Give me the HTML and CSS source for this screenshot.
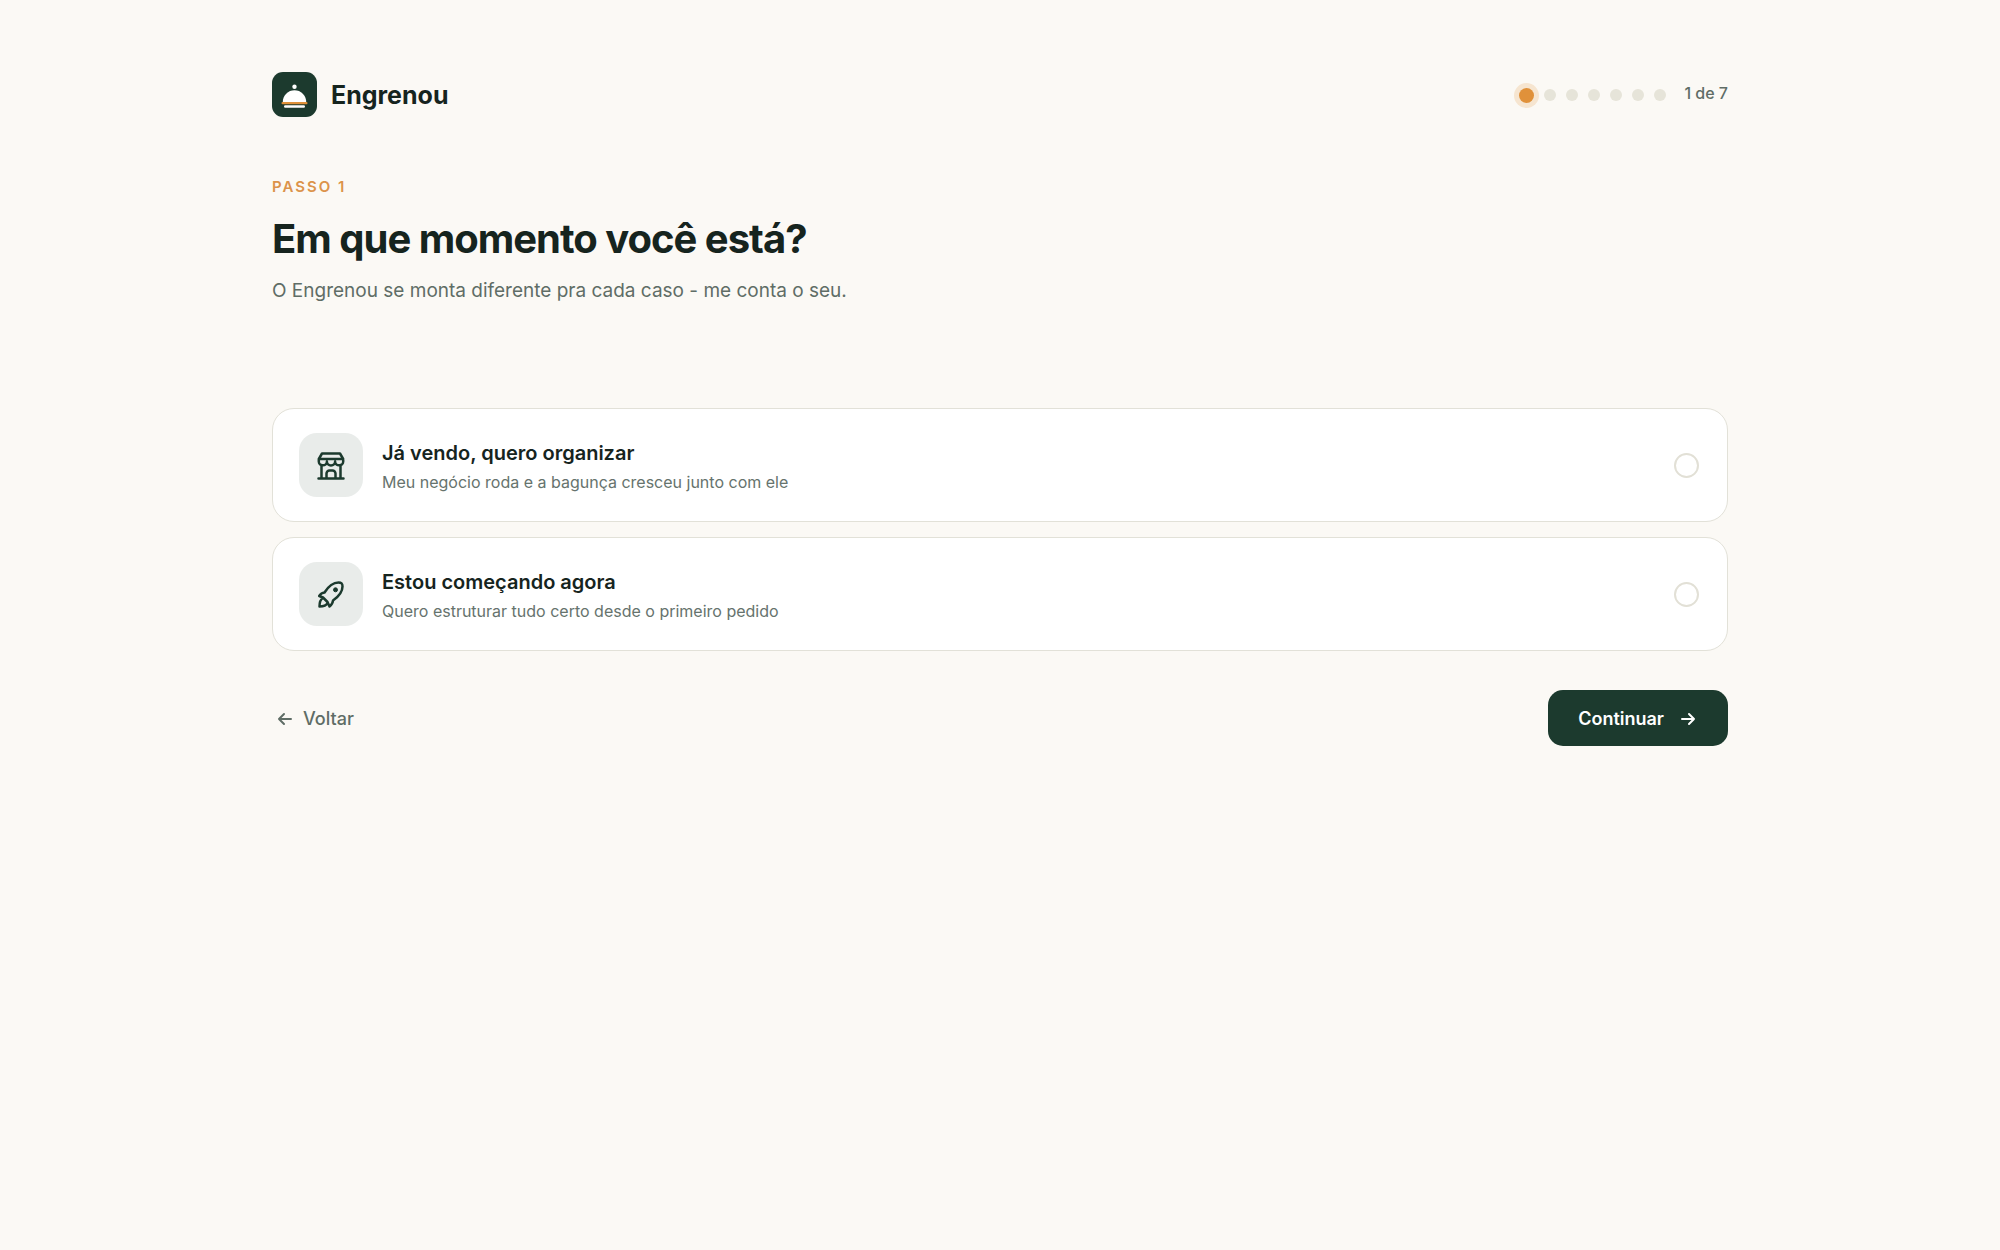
FILE: index.html
```html
<!DOCTYPE html>
<html lang="pt-BR">
<head>
<meta charset="utf-8">
<meta name="viewport" content="width=device-width, initial-scale=1">
<title>Engrenou</title>
<link rel="stylesheet" href="styles.css">
</head>
<body>
<div class="page">
  <header class="topbar">
    <div class="brand">
      <svg class="brand-mark" viewBox="0 0 45 45" aria-hidden="true">
        <rect width="45" height="45" rx="11" fill="#1c3a2e"/>
        <circle cx="22.5" cy="14.8" r="2.2" fill="#fff"/>
        <path d="M10.8 30a11.7 11.7 0 0 1 23.4 0z" fill="#fff"/>
        <rect x="9.5" y="30" width="26" height="2.2" rx="1" fill="#e0913a"/>
        <rect x="12" y="33.2" width="21" height="2.6" rx="1.2" fill="#fff"/>
      </svg>
      <span class="brand-name">Engrenou</span>
    </div>
    <div class="progress">
      <div class="dots" aria-hidden="true">
        <span class="dot dot-current"></span>
        <span class="dot"></span>
        <span class="dot"></span>
        <span class="dot"></span>
        <span class="dot"></span>
        <span class="dot"></span>
        <span class="dot"></span>
      </div>
      <span class="progress-text">1 de 7</span>
    </div>
  </header>

  <main>
    <p class="eyebrow">PASSO 1</p>
    <h1 class="title">Em que momento você está?</h1>
    <p class="subtitle">O Engrenou se monta diferente pra cada caso - me conta o seu.</p>

    <form class="form">
      <div class="options">
        <label class="option">
          <span class="option-icon">
            <svg viewBox="0 0 32 32" aria-hidden="true">
              <path d="M7 4.500h18l3.200 5.500H3.800z M3.800 10v2.500a4 3.800 0 0 0 8.100 0 4 3.800 0 0 0 8.200 0 4 3.800 0 0 0 8.100 0V10 M6.500 16v13.500 M25.500 16v13.500 M3.500 29.500h25 M11.500 29.500V24.500a3 3 0 0 1 3-3h3a3 3 0 0 1 3 3v5"/>
            </svg>
          </span>
          <span class="option-text">
            <span class="option-title">Já vendo, quero organizar</span>
            <span class="option-desc">Meu negócio roda e a bagunça cresceu junto com ele</span>
          </span>
          <input class="option-radio" type="radio" name="momento" value="vendo">
        </label>
        <label class="option">
          <span class="option-icon">
            <svg viewBox="0 0 32 32" aria-hidden="true">
              <path d="M9.500 14.500C13 9 17.500 4.500 23.500 4.500c3.200 0 4 .8 4 4 0 5.500-4.500 10.500-9.500 14-.2 2.500-1.500 4.500-3.500 6l-2-4.500-4.500-4.500-3.800-1.500c1.200-2 3-3.300 5.300-3.500z M8 20c-2.800 1.500-3.500 4.500-3.500 8.500 4 0 6.800-.8 8-3.500"/>
              <circle class="solid" cx="20.500" cy="11.800" r="2"/>
            </svg>
          </span>
          <span class="option-text">
            <span class="option-title">Estou começando agora</span>
            <span class="option-desc">Quero estruturar tudo certo desde o primeiro pedido</span>
          </span>
          <input class="option-radio" type="radio" name="momento" value="comecando">
        </label>
      </div>

      <div class="actions">
        <button class="button button-back" type="button">
          <svg viewBox="0 0 16 16" aria-hidden="true"><path d="M14 8H2 M7 3L2 8l5 5"/></svg>
          Voltar
        </button>
        <button class="button button-next" type="submit">
          Continuar
          <svg viewBox="0 0 16 16" aria-hidden="true"><path d="M2 8h12 M9 3l5 5-5 5"/></svg>
        </button>
      </div>
    </form>
  </main>
</div>
</body>
</html>
```
FILE: styles.css
```css
* { box-sizing: border-box; }

body {
  margin: 0;
  background: #fbf9f5;
  color: #16241e;
  font-family: Inter, "Liberation Sans", sans-serif;
}

.page {
  max-width: 1504px;
  margin: 0 auto;
  padding: 72px 24px;
}

.topbar,
.brand,
.progress,
.dots,
.option,
.actions,
.button {
  display: flex;
  align-items: center;
}

.topbar { justify-content: space-between; }

.brand { gap: 14px; }

.brand-mark {
  display: block;
  width: 45px;
  height: 45px;
}

.brand-name {
  font-size: 25px;
  font-weight: 700;
  line-height: 32px;
}

.progress { gap: 18px; }

.dots { gap: 10px; padding-top: 1px; }

.dot {
  width: 12px;
  height: 12px;
  border-radius: 50%;
  background: #e6e4d9;
}

.dot-current {
  width: 15px;
  height: 15px;
  background: #e0913a;
  box-shadow: 0 0 0 5px #f6e5d0;
}

.progress-text {
  padding-bottom: 3px;
  color: #5f6d66;
  font-size: 16px;
  font-weight: 500;
  line-height: 24px;
}

.eyebrow {
  margin: 58px 0 0;
  color: #dc934a;
  font-size: 15px;
  font-weight: 600;
  line-height: 24px;
  letter-spacing: 2px;
}

.title {
  margin: 16px 0 0;
  font-size: 40px;
  font-weight: 700;
  line-height: 48px;
  letter-spacing: -1px;
}

.subtitle {
  margin: 12px 0 0;
  color: #5f6d66;
  font-size: 19px;
  line-height: 32px;
}

.form { margin-top: 101px; }

.options {
  display: grid;
  gap: 15px;
}

.option {
  gap: 19px;
  padding: 24px 28px 24px 26px;
  border: 1px solid #e2e1d8;
  border-radius: 22px;
  background: #fff;
  cursor: pointer;
}

.option-icon {
  display: grid;
  place-items: center;
  width: 64px;
  height: 64px;
  border-radius: 18px;
  background: #e9ecea;
}

.option-icon svg {
  width: 32px;
  height: 32px;
}

svg path {
  fill: none;
  stroke: #1c3a2e;
  stroke-width: 2.5;
  stroke-linecap: round;
  stroke-linejoin: round;
}

.brand-mark path {
  fill: #fff;
  stroke: none;
}

.solid {
  fill: #1c3a2e;
  stroke: #1c3a2e;
}

.option-text {
  display: grid;
  flex: 1;
  gap: 1px;
  padding-top: 4px;
}

.option-title {
  font-size: 20px;
  font-weight: 600;
  line-height: 28px;
}

.option-desc {
  color: #66736d;
  font-size: 16px;
  line-height: 28px;
}

.option-radio {
  appearance: none;
  width: 25px;
  height: 25px;
  margin: 0;
  border: 2px solid #e2e0d6;
  border-radius: 50%;
  background: #fff;
}

.option-radio:checked { border: 8px solid #1c3a2e; }

.actions {
  justify-content: space-between;
  margin-top: 39px;
}

.button {
  gap: 16px;
  height: 56px;
  border: 0;
  border-radius: 15px;
  font: 600 18px/28px Inter, "Liberation Sans", sans-serif;
  cursor: pointer;
}

.button svg {
  width: 16px;
  height: 16px;
}

.button svg path {
  stroke: currentColor;
  stroke-width: 2;
}

.button-back {
  gap: 10px;
  padding: 2px 5px 0;
  background: none;
  color: #5f6d66;
  font-weight: 500;
}

.button-next {
  padding: 2px 32px 0 30px;
  background: #1c3a2e;
  color: #fff;
}
```
